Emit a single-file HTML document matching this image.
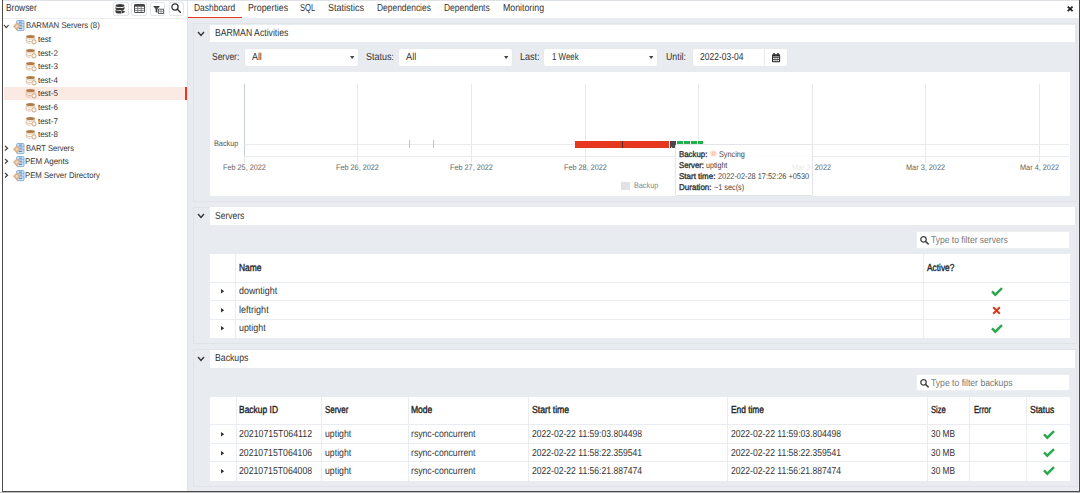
<!DOCTYPE html>
<html><head><meta charset="utf-8"><style>
html,body{margin:0;padding:0;}
body{width:1080px;height:493px;position:relative;overflow:hidden;background:#fff;font-family:"Liberation Sans", sans-serif;}
.a{position:absolute;}
.t{position:absolute;white-space:nowrap;line-height:1;transform-origin:0 0;text-rendering:geometricPrecision;}
svg{position:absolute;overflow:visible;}
</style></head><body>
<div class="a" style="left:187px;top:18px;width:893px;height:475px;background:#e8ebf0;"></div>
<div class="a" style="left:188px;top:0px;width:892px;height:18px;background:#fff;"></div>
<div class="a" style="left:187px;top:0px;width:1px;height:493px;background:#dfe2e7;"></div>
<div class="a" style="left:3px;top:18px;width:184px;height:1px;background:#eceef2;"></div>
<div class="a" style="left:3px;top:0px;width:1077px;height:1px;background:#dfe2e6;"></div>
<div class="a" style="left:188px;top:16.5px;width:54px;height:1.5px;background:#e5381f;"></div>
<div class="t" style="left:5.80px;top:4px;font-size:10.2px;color:#333;transform:scaleX(0.8243);">Browser</div>
<div class="a" style="left:113px;top:2px;width:15.5px;height:14px;background:#fff;border:1px solid #e3e6ea;box-sizing:border-box;border-radius:2px;"></div>
<div class="a" style="left:131.3px;top:2px;width:15.699999999999989px;height:14px;background:#fff;border:1px solid #e3e6ea;box-sizing:border-box;border-radius:2px;"></div>
<div class="a" style="left:150.2px;top:2px;width:15.300000000000011px;height:14px;background:#fff;border:1px solid #e3e6ea;box-sizing:border-box;border-radius:2px;"></div>
<div class="a" style="left:168.7px;top:2px;width:15.600000000000023px;height:14px;background:#fff;border:1px solid #e3e6ea;box-sizing:border-box;border-radius:2px;"></div>
<svg style="left:115px;top:4px" width="11" height="10" viewBox="0 0 11 10">
<ellipse cx="5" cy="1.6" rx="4.5" ry="1.6" fill="#3a3a3a"/>
<path d="M0.5 2.5v2.2c0 .9 2 1.6 4.5 1.6s4.5-.7 4.5-1.6V2.5c0 .9-2 1.6-4.5 1.6S.5 3.4.5 2.5z" fill="#3a3a3a"/>
<path d="M0.5 5.5v2.4c0 .9 2 1.6 4.5 1.6h1V6.9c-.3 0-.6 0-1 0C2.5 6.9.5 6.3.5 5.5z" fill="#3a3a3a"/>
<path d="M6.5 5.8l4 2-4 2z" fill="#3a3a3a"/>
</svg>
<svg style="left:134px;top:4px" width="11" height="9" viewBox="0 0 11 9">
<rect x="0.5" y="0.5" width="10" height="8" rx="0.6" fill="#fff" stroke="#444" stroke-width="1"/>
<rect x="0.5" y="0.5" width="10" height="2.2" fill="#444"/>
<path d="M0.5 4.6h10M0.5 6.6h10M3.8 2.5v6M7.2 2.5v6" stroke="#666" stroke-width="0.8"/>
</svg>
<svg style="left:152.5px;top:5.5px" width="11" height="8" viewBox="0 0 11 8">
<path d="M0 0h7l-2.6 3v4l-1.8-1V3z" fill="#444"/>
<rect x="5.5" y="3.2" width="5" height="4.3" fill="#fff" stroke="#555" stroke-width="0.9"/>
<path d="M5.5 5.3h5M8 3.2v4.3" stroke="#777" stroke-width="0.7"/>
</svg>
<svg style="left:171.3px;top:3.3px" width="10" height="10" viewBox="0 0 10 10">
<circle cx="4" cy="4" r="3.1" fill="none" stroke="#333" stroke-width="1.3"/>
<path d="M6.3 6.3L9.3 9.3" stroke="#333" stroke-width="1.5" stroke-linecap="round"/>
</svg>
<div class="a" style="left:4px;top:87px;width:181px;height:13px;background:#fbeae4;"></div>
<div class="a" style="left:185px;top:87px;width:2px;height:13px;background:#e5381f;"></div>
<svg style="left:3.2px;top:23.499999999999996px" width="6.6" height="4.6" viewBox="-1 -1 6.6 4.6"><path d="M0 0L2.3 2.6L4.6 0" fill="none" stroke="#333" stroke-width="1.1"/></svg>
<svg style="left:12.8px;top:20.4px" width="12" height="11" viewBox="0 0 12 11">
<path d="M4.6 0.5h5.4c.6 0 1 .4 1 .9v8.3c0 .5-.4.9-1 .9H4.6c-.6 0-1-.4-1-.9V1.4c0-.5.4-.9 1-.9z" fill="#d4e4f4" stroke="#7aaad8" stroke-width="0.9"/>
<path d="M3.6 3.6h7.4M3.6 6.8h7.4" stroke="#7aaad8" stroke-width="0.8"/>
<path d="M5.8 2.1h3.4M5.8 5.2h3.4M5.8 8.4h3.4" stroke="#4f86c6" stroke-width="1"/>
<path d="M3.9 2.3L7.8 6.3L3.9 10.5L0 6.3z" fill="#ddb28a"/>
<path d="M3.9 4.6L5.6 6.3L3.9 8.1L2.2 6.3z" fill="#f0d9c2"/>
</svg>
<div class="t" style="left:25.50px;top:21px;font-size:8.3px;color:#333;transform:scaleX(0.9359);">BARMAN Servers (8)</div>
<svg style="left:26px;top:34.9px" width="11" height="10" viewBox="0 0 11 10">
<ellipse cx="4.5" cy="1.5" rx="4.4" ry="1.5" fill="#b27a48"/>
<path d="M0.2 2.6c0 .8 1.9 1.5 4.3 1.5s4.3-.7 4.3-1.5" fill="none" stroke="#d9b48f" stroke-width="0.9"/>
<path d="M0.2 3.2v3.6c0 .8 1.9 1.5 4.3 1.5" fill="none" stroke="#ddb894" stroke-width="0.8"/>
<path d="M8.8 3.2v1.6" fill="none" stroke="#ddb894" stroke-width="0.8"/>
<path d="M0.2 5.1c0 .8 1.9 1.5 4.3 1.5h1" fill="none" stroke="#d9b48f" stroke-width="0.9"/>
<circle cx="8" cy="6.9" r="2.1" fill="#fff" stroke="#c99567" stroke-width="0.9"/>
</svg>
<div class="t" style="left:37.90px;top:35px;font-size:8.3px;color:#333;transform:scaleX(0.9738);">test</div>
<svg style="left:26px;top:48.5px" width="11" height="10" viewBox="0 0 11 10">
<ellipse cx="4.5" cy="1.5" rx="4.4" ry="1.5" fill="#b27a48"/>
<path d="M0.2 2.6c0 .8 1.9 1.5 4.3 1.5s4.3-.7 4.3-1.5" fill="none" stroke="#d9b48f" stroke-width="0.9"/>
<path d="M0.2 3.2v3.6c0 .8 1.9 1.5 4.3 1.5" fill="none" stroke="#ddb894" stroke-width="0.8"/>
<path d="M8.8 3.2v1.6" fill="none" stroke="#ddb894" stroke-width="0.8"/>
<path d="M0.2 5.1c0 .8 1.9 1.5 4.3 1.5h1" fill="none" stroke="#d9b48f" stroke-width="0.9"/>
<circle cx="8" cy="6.9" r="2.1" fill="#fff" stroke="#c99567" stroke-width="0.9"/>
</svg>
<div class="t" style="left:37.90px;top:49px;font-size:8.3px;color:#333;transform:scaleX(0.9557);">test-2</div>
<svg style="left:26px;top:62.099999999999994px" width="11" height="10" viewBox="0 0 11 10">
<ellipse cx="4.5" cy="1.5" rx="4.4" ry="1.5" fill="#b27a48"/>
<path d="M0.2 2.6c0 .8 1.9 1.5 4.3 1.5s4.3-.7 4.3-1.5" fill="none" stroke="#d9b48f" stroke-width="0.9"/>
<path d="M0.2 3.2v3.6c0 .8 1.9 1.5 4.3 1.5" fill="none" stroke="#ddb894" stroke-width="0.8"/>
<path d="M8.8 3.2v1.6" fill="none" stroke="#ddb894" stroke-width="0.8"/>
<path d="M0.2 5.1c0 .8 1.9 1.5 4.3 1.5h1" fill="none" stroke="#d9b48f" stroke-width="0.9"/>
<circle cx="8" cy="6.9" r="2.1" fill="#fff" stroke="#c99567" stroke-width="0.9"/>
</svg>
<div class="t" style="left:37.90px;top:62px;font-size:8.3px;color:#333;transform:scaleX(0.9557);">test-3</div>
<svg style="left:26px;top:75.69999999999999px" width="11" height="10" viewBox="0 0 11 10">
<ellipse cx="4.5" cy="1.5" rx="4.4" ry="1.5" fill="#b27a48"/>
<path d="M0.2 2.6c0 .8 1.9 1.5 4.3 1.5s4.3-.7 4.3-1.5" fill="none" stroke="#d9b48f" stroke-width="0.9"/>
<path d="M0.2 3.2v3.6c0 .8 1.9 1.5 4.3 1.5" fill="none" stroke="#ddb894" stroke-width="0.8"/>
<path d="M8.8 3.2v1.6" fill="none" stroke="#ddb894" stroke-width="0.8"/>
<path d="M0.2 5.1c0 .8 1.9 1.5 4.3 1.5h1" fill="none" stroke="#d9b48f" stroke-width="0.9"/>
<circle cx="8" cy="6.9" r="2.1" fill="#fff" stroke="#c99567" stroke-width="0.9"/>
</svg>
<div class="t" style="left:37.90px;top:76px;font-size:8.3px;color:#333;transform:scaleX(0.9557);">test-4</div>
<svg style="left:26px;top:89.3px" width="11" height="10" viewBox="0 0 11 10">
<ellipse cx="4.5" cy="1.5" rx="4.4" ry="1.5" fill="#b27a48"/>
<path d="M0.2 2.6c0 .8 1.9 1.5 4.3 1.5s4.3-.7 4.3-1.5" fill="none" stroke="#d9b48f" stroke-width="0.9"/>
<path d="M0.2 3.2v3.6c0 .8 1.9 1.5 4.3 1.5" fill="none" stroke="#ddb894" stroke-width="0.8"/>
<path d="M8.8 3.2v1.6" fill="none" stroke="#ddb894" stroke-width="0.8"/>
<path d="M0.2 5.1c0 .8 1.9 1.5 4.3 1.5h1" fill="none" stroke="#d9b48f" stroke-width="0.9"/>
<circle cx="8" cy="6.9" r="2.1" fill="#fff" stroke="#c99567" stroke-width="0.9"/>
</svg>
<div class="t" style="left:37.90px;top:89px;font-size:8.3px;color:#333;transform:scaleX(0.9557);">test-5</div>
<svg style="left:26px;top:102.89999999999999px" width="11" height="10" viewBox="0 0 11 10">
<ellipse cx="4.5" cy="1.5" rx="4.4" ry="1.5" fill="#b27a48"/>
<path d="M0.2 2.6c0 .8 1.9 1.5 4.3 1.5s4.3-.7 4.3-1.5" fill="none" stroke="#d9b48f" stroke-width="0.9"/>
<path d="M0.2 3.2v3.6c0 .8 1.9 1.5 4.3 1.5" fill="none" stroke="#ddb894" stroke-width="0.8"/>
<path d="M8.8 3.2v1.6" fill="none" stroke="#ddb894" stroke-width="0.8"/>
<path d="M0.2 5.1c0 .8 1.9 1.5 4.3 1.5h1" fill="none" stroke="#d9b48f" stroke-width="0.9"/>
<circle cx="8" cy="6.9" r="2.1" fill="#fff" stroke="#c99567" stroke-width="0.9"/>
</svg>
<div class="t" style="left:37.90px;top:103px;font-size:8.3px;color:#333;transform:scaleX(0.9557);">test-6</div>
<svg style="left:26px;top:116.49999999999999px" width="11" height="10" viewBox="0 0 11 10">
<ellipse cx="4.5" cy="1.5" rx="4.4" ry="1.5" fill="#b27a48"/>
<path d="M0.2 2.6c0 .8 1.9 1.5 4.3 1.5s4.3-.7 4.3-1.5" fill="none" stroke="#d9b48f" stroke-width="0.9"/>
<path d="M0.2 3.2v3.6c0 .8 1.9 1.5 4.3 1.5" fill="none" stroke="#ddb894" stroke-width="0.8"/>
<path d="M8.8 3.2v1.6" fill="none" stroke="#ddb894" stroke-width="0.8"/>
<path d="M0.2 5.1c0 .8 1.9 1.5 4.3 1.5h1" fill="none" stroke="#d9b48f" stroke-width="0.9"/>
<circle cx="8" cy="6.9" r="2.1" fill="#fff" stroke="#c99567" stroke-width="0.9"/>
</svg>
<div class="t" style="left:37.90px;top:117px;font-size:8.3px;color:#333;transform:scaleX(0.9557);">test-7</div>
<svg style="left:26px;top:130.1px" width="11" height="10" viewBox="0 0 11 10">
<ellipse cx="4.5" cy="1.5" rx="4.4" ry="1.5" fill="#b27a48"/>
<path d="M0.2 2.6c0 .8 1.9 1.5 4.3 1.5s4.3-.7 4.3-1.5" fill="none" stroke="#d9b48f" stroke-width="0.9"/>
<path d="M0.2 3.2v3.6c0 .8 1.9 1.5 4.3 1.5" fill="none" stroke="#ddb894" stroke-width="0.8"/>
<path d="M8.8 3.2v1.6" fill="none" stroke="#ddb894" stroke-width="0.8"/>
<path d="M0.2 5.1c0 .8 1.9 1.5 4.3 1.5h1" fill="none" stroke="#d9b48f" stroke-width="0.9"/>
<circle cx="8" cy="6.9" r="2.1" fill="#fff" stroke="#c99567" stroke-width="0.9"/>
</svg>
<div class="t" style="left:37.90px;top:130px;font-size:8.3px;color:#333;transform:scaleX(0.9557);">test-8</div>
<svg style="left:3.7px;top:144.65px" width="4.6" height="6.5" viewBox="-1 -1 4.6 6.5"><path d="M0 0L2.6 2.25L0 4.5" fill="none" stroke="#444" stroke-width="1.2"/></svg>
<svg style="left:12.8px;top:142.70000000000002px" width="12" height="11" viewBox="0 0 12 11">
<path d="M4.6 0.5h5.4c.6 0 1 .4 1 .9v8.3c0 .5-.4.9-1 .9H4.6c-.6 0-1-.4-1-.9V1.4c0-.5.4-.9 1-.9z" fill="#d4e4f4" stroke="#7aaad8" stroke-width="0.9"/>
<path d="M3.6 3.6h7.4M3.6 6.8h7.4" stroke="#7aaad8" stroke-width="0.8"/>
<path d="M5.8 2.1h3.4M5.8 5.2h3.4M5.8 8.4h3.4" stroke="#4f86c6" stroke-width="1"/>
<path d="M3.9 2.3L7.8 6.3L3.9 10.5L0 6.3z" fill="#ddb28a"/>
<path d="M3.9 4.6L5.6 6.3L3.9 8.1L2.2 6.3z" fill="#f0d9c2"/>
</svg>
<div class="t" style="left:25.90px;top:144px;font-size:8.3px;color:#333;transform:scaleX(0.9086);">BART Servers</div>
<svg style="left:3.7px;top:158.24999999999997px" width="4.6" height="6.5" viewBox="-1 -1 4.6 6.5"><path d="M0 0L2.6 2.25L0 4.5" fill="none" stroke="#444" stroke-width="1.2"/></svg>
<svg style="left:12.8px;top:156.29999999999998px" width="12" height="11" viewBox="0 0 12 11">
<path d="M4.6 0.5h5.4c.6 0 1 .4 1 .9v8.3c0 .5-.4.9-1 .9H4.6c-.6 0-1-.4-1-.9V1.4c0-.5.4-.9 1-.9z" fill="#d4e4f4" stroke="#7aaad8" stroke-width="0.9"/>
<path d="M3.6 3.6h7.4M3.6 6.8h7.4" stroke="#7aaad8" stroke-width="0.8"/>
<path d="M5.8 2.1h3.4M5.8 5.2h3.4M5.8 8.4h3.4" stroke="#4f86c6" stroke-width="1"/>
<path d="M3.9 2.3L7.8 6.3L3.9 10.5L0 6.3z" fill="#ddb28a"/>
<path d="M3.9 4.6L5.6 6.3L3.9 8.1L2.2 6.3z" fill="#f0d9c2"/>
</svg>
<div class="t" style="left:24.80px;top:157px;font-size:8.3px;color:#333;transform:scaleX(0.9572);">PEM Agents</div>
<svg style="left:3.7px;top:171.85px" width="4.6" height="6.5" viewBox="-1 -1 4.6 6.5"><path d="M0 0L2.6 2.25L0 4.5" fill="none" stroke="#444" stroke-width="1.2"/></svg>
<svg style="left:12.8px;top:169.9px" width="12" height="11" viewBox="0 0 12 11">
<path d="M4.6 0.5h5.4c.6 0 1 .4 1 .9v8.3c0 .5-.4.9-1 .9H4.6c-.6 0-1-.4-1-.9V1.4c0-.5.4-.9 1-.9z" fill="#d4e4f4" stroke="#7aaad8" stroke-width="0.9"/>
<path d="M3.6 3.6h7.4M3.6 6.8h7.4" stroke="#7aaad8" stroke-width="0.8"/>
<path d="M5.8 2.1h3.4M5.8 5.2h3.4M5.8 8.4h3.4" stroke="#4f86c6" stroke-width="1"/>
<path d="M3.9 2.3L7.8 6.3L3.9 10.5L0 6.3z" fill="#ddb28a"/>
<path d="M3.9 4.6L5.6 6.3L3.9 8.1L2.2 6.3z" fill="#f0d9c2"/>
</svg>
<div class="t" style="left:24.80px;top:171px;font-size:8.3px;color:#333;transform:scaleX(0.9338);">PEM Server Directory</div>
<div class="t" style="left:193.70px;top:4px;font-size:10.2px;color:#333;transform:scaleX(0.8291);">Dashboard</div>
<div class="t" style="left:248.00px;top:4px;font-size:10.2px;color:#333;transform:scaleX(0.8632);">Properties</div>
<div class="t" style="left:300.30px;top:4px;font-size:10.2px;color:#333;transform:scaleX(0.7481);">SQL</div>
<div class="t" style="left:328.40px;top:4px;font-size:10.2px;color:#333;transform:scaleX(0.8853);">Statistics</div>
<div class="t" style="left:377.30px;top:4px;font-size:10.2px;color:#333;transform:scaleX(0.8272);">Dependencies</div>
<div class="t" style="left:444.40px;top:4px;font-size:10.2px;color:#333;transform:scaleX(0.8314);">Dependents</div>
<div class="t" style="left:502.70px;top:4px;font-size:10.2px;color:#333;transform:scaleX(0.8622);">Monitoring</div>
<svg style="left:1066.8px;top:5.9px" width="6.3" height="5.9" viewBox="0 0 6.3 5.9"><path d="M0.7 0.7L5.6 5.2M5.6 0.7L0.7 5.2" stroke="#222" stroke-width="1.8"/></svg>
<div class="a" style="left:192.5px;top:23px;width:884.0px;height:179px;border:1px solid #e0e3e8;box-sizing:border-box;"></div>
<div class="a" style="left:210px;top:25px;width:865px;height:17px;background:#fff;"></div>
<svg style="left:197.3px;top:30.8px" width="8" height="5.4" viewBox="-1 -1 8 5.4"><path d="M0 0L3.0 3.4L6 0" fill="none" stroke="#333" stroke-width="1.4"/></svg>
<div class="t" style="left:215.00px;top:29px;font-size:10.2px;color:#333;transform:scaleX(0.8530);">BARMAN Activities</div>
<div class="a" style="left:192.5px;top:206.5px;width:884.0px;height:137.5px;border:1px solid #e0e3e8;box-sizing:border-box;"></div>
<div class="a" style="left:210px;top:207px;width:865px;height:18px;background:#fff;"></div>
<svg style="left:197.3px;top:213.3px" width="8" height="5.4" viewBox="-1 -1 8 5.4"><path d="M0 0L3.0 3.4L6 0" fill="none" stroke="#333" stroke-width="1.4"/></svg>
<div class="t" style="left:215.00px;top:212px;font-size:10.2px;color:#333;transform:scaleX(0.8342);">Servers</div>
<div class="a" style="left:192.5px;top:349px;width:884.0px;height:138px;border:1px solid #e0e3e8;box-sizing:border-box;"></div>
<div class="a" style="left:210px;top:350px;width:865px;height:17.5px;background:#fff;"></div>
<svg style="left:197.3px;top:356.05px" width="8" height="5.4" viewBox="-1 -1 8 5.4"><path d="M0 0L3.0 3.4L6 0" fill="none" stroke="#333" stroke-width="1.4"/></svg>
<div class="t" style="left:215.00px;top:354px;font-size:10.2px;color:#333;transform:scaleX(0.8543);">Backups</div>
<div class="t" style="left:212.40px;top:53px;font-size:10.2px;color:#333;transform:scaleX(0.8311);">Server:</div>
<div class="a" style="left:244px;top:48px;width:115px;height:19px;background:#fff;border:1px solid #e6e9ed;box-sizing:border-box;border-radius:3px;"></div>
<div class="t" style="left:252.10px;top:53px;font-size:10.2px;color:#333;transform:scaleX(0.8681);">All</div>
<svg style="left:349.90000000000003px;top:55.5px" width="4.4" height="3" viewBox="0 0 4.4 3"><path d="M0 0h4.4L2.2 3z" fill="#444"/></svg>
<div class="t" style="left:365.90px;top:53px;font-size:10.2px;color:#333;transform:scaleX(0.8776);">Status:</div>
<div class="a" style="left:398px;top:48px;width:115px;height:19px;background:#fff;border:1px solid #e6e9ed;box-sizing:border-box;border-radius:3px;"></div>
<div class="t" style="left:405.60px;top:53px;font-size:10.2px;color:#333;transform:scaleX(0.9043);">All</div>
<svg style="left:503.90000000000003px;top:55.5px" width="4.4" height="3" viewBox="0 0 4.4 3"><path d="M0 0h4.4L2.2 3z" fill="#444"/></svg>
<div class="t" style="left:519.80px;top:53px;font-size:10.2px;color:#333;transform:scaleX(0.8845);">Last:</div>
<div class="a" style="left:543px;top:48px;width:115px;height:19px;background:#fff;border:1px solid #e6e9ed;box-sizing:border-box;border-radius:3px;"></div>
<div class="t" style="left:552.40px;top:53px;font-size:10.2px;color:#333;transform:scaleX(0.7771);">1 Week</div>
<svg style="left:648.9px;top:55.5px" width="4.4" height="3" viewBox="0 0 4.4 3"><path d="M0 0h4.4L2.2 3z" fill="#444"/></svg>
<div class="t" style="left:665.90px;top:53px;font-size:10.2px;color:#333;transform:scaleX(0.8624);">Until:</div>
<div class="a" style="left:692px;top:48px;width:96px;height:19px;background:#fff;border:1px solid #e6e9ed;box-sizing:border-box;border-radius:3px;"></div>
<div class="a" style="left:764.2px;top:48px;width:1.0px;height:19px;background:#e8eaee;"></div>
<div class="t" style="left:700.00px;top:53px;font-size:10.2px;color:#333;transform:scaleX(0.8332);">2022-03-04</div>
<svg style="left:771.7px;top:52.6px" width="8.1" height="9.2" viewBox="0 0 8.1 9.2">
<rect x="0" y="1.2" width="8.1" height="8" rx="0.9" fill="#2e2e2e"/>
<rect x="1.3" y="0" width="1.6" height="2.4" rx="0.6" fill="#2e2e2e"/><rect x="5.2" y="0" width="1.6" height="2.4" rx="0.6" fill="#2e2e2e"/>
<rect x="0.8" y="3.4" width="6.5" height="0.6" fill="#fff" opacity="0.8"/>
<rect x="1.2" y="4.7" width="1.5" height="1.4" fill="#fff"/><rect x="3.3" y="4.7" width="1.5" height="1.4" fill="#fff"/><rect x="5.4" y="4.7" width="1.5" height="1.4" fill="#fff"/>
<rect x="1.2" y="6.8" width="1.5" height="1.4" fill="#fff"/><rect x="3.3" y="6.8" width="1.5" height="1.4" fill="#fff"/><rect x="5.4" y="6.8" width="1.5" height="1.4" fill="#fff"/>
</svg>
<div class="a" style="left:210px;top:72px;width:860px;height:124px;background:#fff;"></div>
<div class="a" style="left:243.9px;top:84px;width:1.0px;height:73px;background:#c5cfdb;"></div>
<div class="a" style="left:243.9px;top:157px;width:1.0px;height:6px;background:#e0e3e8;"></div>
<div class="a" style="left:357.2px;top:84px;width:1.0px;height:79px;background:#e6e9ee;"></div>
<div class="a" style="left:471.2px;top:84px;width:1.0px;height:79px;background:#e6e9ee;"></div>
<div class="a" style="left:585.0px;top:84px;width:1.0px;height:79px;background:#e6e9ee;"></div>
<div class="a" style="left:698.0px;top:84px;width:1.0px;height:79px;background:#e6e9ee;"></div>
<div class="a" style="left:811.5px;top:84px;width:1.0px;height:79px;background:#e6e9ee;"></div>
<div class="a" style="left:925.1px;top:84px;width:1.0px;height:79px;background:#e6e9ee;"></div>
<div class="a" style="left:1039.0px;top:84px;width:1.0px;height:79px;background:#e6e9ee;"></div>
<div class="a" style="left:244px;top:143.6px;width:825px;height:1.0px;background:#e8ebef;"></div>
<div class="a" style="left:244px;top:156.3px;width:825px;height:1.0px;background:#e8ebef;"></div>
<div class="t" style="left:213.60px;top:140px;font-size:8px;color:#555;transform:scaleX(0.9106);">Backup</div>
<div class="a" style="left:409px;top:140px;width:1px;height:8px;background:#b9c4d0;"></div>
<div class="a" style="left:432.5px;top:140px;width:1.0px;height:8px;background:#b9c4d0;"></div>
<div class="t" style="left:222.70px;top:164px;font-size:8px;color:#666;transform:scaleX(0.9099);">Feb 25, 2022</div>
<div class="t" style="left:336.00px;top:164px;font-size:8px;color:#666;transform:scaleX(0.9099);">Feb 26, 2022</div>
<div class="t" style="left:450.00px;top:164px;font-size:8px;color:#666;transform:scaleX(0.9099);">Feb 27, 2022</div>
<div class="t" style="left:563.80px;top:164px;font-size:8px;color:#666;transform:scaleX(0.9099);">Feb 28, 2022</div>
<div class="t" style="left:792.20px;top:164px;font-size:8px;color:#666;transform:scaleX(0.9158);">Mar 2, 2022</div>
<div class="t" style="left:905.80px;top:164px;font-size:8px;color:#666;transform:scaleX(0.9158);">Mar 3, 2022</div>
<div class="t" style="left:1019.70px;top:164px;font-size:8px;color:#666;transform:scaleX(0.9158);">Mar 4, 2022</div>
<div class="a" style="left:574.7px;top:140.7px;width:94.79999999999995px;height:6.900000000000006px;background:#e5381f;"></div>
<div class="a" style="left:622px;top:140.7px;width:1px;height:6.900000000000006px;background:#5a2a20;"></div>
<div class="a" style="left:669.5px;top:140.7px;width:1.0px;height:6.900000000000006px;background:#5a3a35;"></div>
<div class="a" style="left:671px;top:140.7px;width:5px;height:6.900000000000006px;background:#48484e;border-radius:0 0 0 2px;"></div>
<div class="a" style="left:677.4px;top:140.7px;width:5.600000000000023px;height:3.1000000000000227px;background:#21b04b;"></div>
<div class="a" style="left:677.4px;top:143.8px;width:5.600000000000023px;height:3.799999999999983px;background:#ececec;"></div>
<div class="a" style="left:684.1999999999999px;top:140.7px;width:5.600000000000023px;height:3.1000000000000227px;background:#21b04b;"></div>
<div class="a" style="left:684.1999999999999px;top:143.8px;width:5.600000000000023px;height:3.799999999999983px;background:#ececec;"></div>
<div class="a" style="left:691.0px;top:140.7px;width:5.600000000000023px;height:3.1000000000000227px;background:#21b04b;"></div>
<div class="a" style="left:691.0px;top:143.8px;width:5.600000000000023px;height:3.799999999999983px;background:#ececec;"></div>
<div class="a" style="left:697.8px;top:140.7px;width:5.600000000000023px;height:3.1000000000000227px;background:#21b04b;"></div>
<div class="a" style="left:697.8px;top:143.8px;width:5.600000000000023px;height:3.799999999999983px;background:#ececec;"></div>
<div class="a" style="left:621px;top:182px;width:9px;height:7.599999999999994px;background:#e2e2e2;"></div>
<div class="t" style="left:633.80px;top:182px;font-size:8px;color:#888;transform:scaleX(0.9069);">Backup</div>
<div class="a" style="left:674.5px;top:144.3px;width:138.89999999999998px;height:52.0px;background:rgba(255,255,255,0.85);border:1px solid #e3e5e8;box-sizing:border-box;border-radius:2px;"></div>
<div class="t" style="left:678.67px;top:150px;font-size:8.3px;color:#333;-webkit-text-stroke:0.35px #333;transform:scaleX(0.9453);">Backup:</div>
<svg style="left:710px;top:150px" width="7" height="7" viewBox="0 0 7 7"><circle cx="3.5" cy="3.5" r="3.3" fill="#fbe3d6"/><circle cx="3.5" cy="3.5" r="1.5" fill="none" stroke="#f3b090" stroke-width="0.8"/></svg>
<div class="t" style="left:719.40px;top:150px;font-size:8.3px;color:#444;transform:scaleX(0.8762);">Syncing</div>
<div class="t" style="left:678.67px;top:161px;font-size:8.3px;color:#333;-webkit-text-stroke:0.35px #333;transform:scaleX(0.9324);">Server:</div>
<div class="t" style="left:706.10px;top:161px;font-size:8.3px;color:#444;transform:scaleX(0.8553);">uptight</div>
<div class="t" style="left:678.67px;top:172px;font-size:8.3px;color:#333;-webkit-text-stroke:0.35px #333;transform:scaleX(0.9613);">Start time:</div>
<div class="t" style="left:717.50px;top:172px;font-size:8.3px;color:#444;transform:scaleX(0.8880);">2022-02-28 17:52:26 +0530</div>
<div class="t" style="left:678.67px;top:183px;font-size:8.3px;color:#333;-webkit-text-stroke:0.35px #333;transform:scaleX(0.9667);">Duration:</div>
<div class="t" style="left:713.75px;top:183px;font-size:8.3px;color:#444;transform:scaleX(0.8775);">~1 sec(s)</div>
<div class="a" style="left:916px;top:231px;width:154px;height:18px;background:#fff;border:1px solid #eceef1;box-sizing:border-box;"></div>
<svg style="left:920px;top:236.3px" width="9" height="8" viewBox="0 0 9 8">
<circle cx="3.5" cy="3.4" r="2.7" fill="none" stroke="#444" stroke-width="1.3"/>
<path d="M5.5 5.4L8.2 7.9" stroke="#444" stroke-width="1.5" stroke-linecap="round"/></svg>
<div class="t" style="left:931.40px;top:236px;font-size:9.8px;color:#777;transform:scaleX(0.8709);">Type to filter servers</div>
<div class="a" style="left:916px;top:374px;width:154px;height:17px;background:#fff;border:1px solid #eceef1;box-sizing:border-box;"></div>
<svg style="left:920px;top:379.0px" width="9" height="8" viewBox="0 0 9 8">
<circle cx="3.5" cy="3.4" r="2.7" fill="none" stroke="#444" stroke-width="1.3"/>
<path d="M5.5 5.4L8.2 7.9" stroke="#444" stroke-width="1.5" stroke-linecap="round"/></svg>
<div class="t" style="left:931.40px;top:379px;font-size:9.8px;color:#777;transform:scaleX(0.8805);">Type to filter backups</div>
<div class="a" style="left:210px;top:254px;width:860px;height:84px;background:#fff;"></div>
<div class="a" style="left:210px;top:282.0px;width:860px;height:1.0px;background:#e9ecf0;"></div>
<div class="a" style="left:210px;top:300.3px;width:860px;height:1.0px;background:#e9ecf0;"></div>
<div class="a" style="left:210px;top:318.9px;width:860px;height:1.0px;background:#e9ecf0;"></div>
<div class="a" style="left:235.1px;top:254px;width:1.0px;height:84px;background:#e9ecf0;"></div>
<div class="a" style="left:923.0px;top:254px;width:1.0px;height:84px;background:#e9ecf0;"></div>
<div class="t" style="left:239.08px;top:264px;font-size:10.2px;color:#222;-webkit-text-stroke:0.35px #222;transform:scaleX(0.8306);">Name</div>
<div class="t" style="left:926.77px;top:264px;font-size:10.2px;color:#222;-webkit-text-stroke:0.35px #222;transform:scaleX(0.8195);">Active?</div>
<svg style="left:221.2px;top:289.2px" width="3.2" height="4.6" viewBox="0 0 3.2 4.6"><path d="M0 0L3.2 2.3L0 4.6z" fill="#333"/></svg>
<div class="t" style="left:238.90px;top:287px;font-size:10.2px;color:#333;transform:scaleX(0.8748);">downtight</div>
<svg style="left:221.2px;top:307.6px" width="3.2" height="4.6" viewBox="0 0 3.2 4.6"><path d="M0 0L3.2 2.3L0 4.6z" fill="#333"/></svg>
<div class="t" style="left:238.90px;top:306px;font-size:10.2px;color:#333;transform:scaleX(0.8875);">leftright</div>
<svg style="left:221.2px;top:326.0px" width="3.2" height="4.6" viewBox="0 0 3.2 4.6"><path d="M0 0L3.2 2.3L0 4.6z" fill="#333"/></svg>
<div class="t" style="left:238.90px;top:324px;font-size:10.2px;color:#333;transform:scaleX(0.8713);">uptight</div>
<svg style="left:990.6px;top:286.8px" width="12" height="9" viewBox="0 0 12 9"><path d="M1 4.4L4.3 7.7L11 1.1" fill="none" stroke="#2aa84a" stroke-width="2.4"/></svg>
<svg style="left:992.1px;top:305.7px" width="9" height="9" viewBox="0 0 9 9"><path d="M1.2 1.2L7.8 7.8M7.8 1.2L1.2 7.8" stroke="#e0341d" stroke-width="2"/></svg>
<svg style="left:990.6px;top:324.0px" width="12" height="9" viewBox="0 0 12 9"><path d="M1 4.4L4.3 7.7L11 1.1" fill="none" stroke="#2aa84a" stroke-width="2.4"/></svg>
<div class="a" style="left:210px;top:396.7px;width:860px;height:84.30000000000001px;background:#fff;"></div>
<div class="a" style="left:210px;top:424.1px;width:860px;height:1.0px;background:#e9ecf0;"></div>
<div class="a" style="left:210px;top:442.6px;width:860px;height:1.0px;background:#e9ecf0;"></div>
<div class="a" style="left:210px;top:461.1px;width:860px;height:1.0px;background:#e9ecf0;"></div>
<div class="a" style="left:235.5px;top:396.7px;width:1.0px;height:84.30000000000001px;background:#e9ecf0;"></div>
<div class="a" style="left:321.0px;top:396.7px;width:1.0px;height:84.30000000000001px;background:#e9ecf0;"></div>
<div class="a" style="left:407.9px;top:396.7px;width:1.0px;height:84.30000000000001px;background:#e9ecf0;"></div>
<div class="a" style="left:527.7px;top:396.7px;width:1.0px;height:84.30000000000001px;background:#e9ecf0;"></div>
<div class="a" style="left:726.8px;top:396.7px;width:1.0px;height:84.30000000000001px;background:#e9ecf0;"></div>
<div class="a" style="left:926.8px;top:396.7px;width:1.0px;height:84.30000000000001px;background:#e9ecf0;"></div>
<div class="a" style="left:969.0px;top:396.7px;width:1.0px;height:84.30000000000001px;background:#e9ecf0;"></div>
<div class="a" style="left:1026.2px;top:396.7px;width:1.0px;height:84.30000000000001px;background:#e9ecf0;"></div>
<div class="t" style="left:238.98px;top:406px;font-size:10.2px;color:#222;-webkit-text-stroke:0.35px #222;transform:scaleX(0.8308);">Backup ID</div>
<div class="t" style="left:325.18px;top:406px;font-size:10.2px;color:#222;-webkit-text-stroke:0.35px #222;transform:scaleX(0.7758);">Server</div>
<div class="t" style="left:410.98px;top:406px;font-size:10.2px;color:#222;-webkit-text-stroke:0.35px #222;transform:scaleX(0.8386);">Mode</div>
<div class="t" style="left:531.67px;top:406px;font-size:10.2px;color:#222;-webkit-text-stroke:0.35px #222;transform:scaleX(0.8526);">Start time</div>
<div class="t" style="left:731.17px;top:406px;font-size:10.2px;color:#222;-webkit-text-stroke:0.35px #222;transform:scaleX(0.8202);">End time</div>
<div class="t" style="left:930.77px;top:406px;font-size:10.2px;color:#222;-webkit-text-stroke:0.35px #222;transform:scaleX(0.7468);">Size</div>
<div class="t" style="left:973.77px;top:406px;font-size:10.2px;color:#222;-webkit-text-stroke:0.35px #222;transform:scaleX(0.7507);">Error</div>
<div class="t" style="left:1030.08px;top:406px;font-size:10.2px;color:#222;-webkit-text-stroke:0.35px #222;transform:scaleX(0.8389);">Status</div>
<svg style="left:221.2px;top:432.1px" width="3.2" height="4.6" viewBox="0 0 3.2 4.6"><path d="M0 0L3.2 2.3L0 4.6z" fill="#333"/></svg>
<div class="t" style="left:238.80px;top:430px;font-size:10.2px;color:#333;transform:scaleX(0.8623);">20210715T064112</div>
<div class="t" style="left:325.00px;top:430px;font-size:10.2px;color:#333;transform:scaleX(0.8583);">uptight</div>
<div class="t" style="left:410.80px;top:430px;font-size:10.2px;color:#333;transform:scaleX(0.8496);">rsync-concurrent</div>
<div class="t" style="left:531.70px;top:430px;font-size:10.2px;color:#333;transform:scaleX(0.8420);">2022-02-22 11:59:03.804498</div>
<div class="t" style="left:731.00px;top:430px;font-size:10.2px;color:#333;transform:scaleX(0.8427);">2022-02-22 11:59:03.804498</div>
<div class="t" style="left:930.60px;top:430px;font-size:10.2px;color:#333;transform:scaleX(0.8196);">30 MB</div>
<svg style="left:1042.5px;top:429.5px" width="12" height="9" viewBox="0 0 12 9"><path d="M1 4.4L4.3 7.7L11 1.1" fill="none" stroke="#2aa84a" stroke-width="2.4"/></svg>
<svg style="left:221.2px;top:450.55px" width="3.2" height="4.6" viewBox="0 0 3.2 4.6"><path d="M0 0L3.2 2.3L0 4.6z" fill="#333"/></svg>
<div class="t" style="left:238.80px;top:449px;font-size:10.2px;color:#333;transform:scaleX(0.8547);">20210715T064106</div>
<div class="t" style="left:325.00px;top:449px;font-size:10.2px;color:#333;transform:scaleX(0.8583);">uptight</div>
<div class="t" style="left:410.80px;top:449px;font-size:10.2px;color:#333;transform:scaleX(0.8496);">rsync-concurrent</div>
<div class="t" style="left:531.70px;top:449px;font-size:10.2px;color:#333;transform:scaleX(0.8420);">2022-02-22 11:58:22.359541</div>
<div class="t" style="left:731.00px;top:449px;font-size:10.2px;color:#333;transform:scaleX(0.8427);">2022-02-22 11:58:22.359541</div>
<div class="t" style="left:930.60px;top:449px;font-size:10.2px;color:#333;transform:scaleX(0.8196);">30 MB</div>
<svg style="left:1042.5px;top:447.95px" width="12" height="9" viewBox="0 0 12 9"><path d="M1 4.4L4.3 7.7L11 1.1" fill="none" stroke="#2aa84a" stroke-width="2.4"/></svg>
<svg style="left:221.2px;top:469.0px" width="3.2" height="4.6" viewBox="0 0 3.2 4.6"><path d="M0 0L3.2 2.3L0 4.6z" fill="#333"/></svg>
<div class="t" style="left:238.80px;top:467px;font-size:10.2px;color:#333;transform:scaleX(0.8547);">20210715T064008</div>
<div class="t" style="left:325.00px;top:467px;font-size:10.2px;color:#333;transform:scaleX(0.8583);">uptight</div>
<div class="t" style="left:410.80px;top:467px;font-size:10.2px;color:#333;transform:scaleX(0.8496);">rsync-concurrent</div>
<div class="t" style="left:531.70px;top:467px;font-size:10.2px;color:#333;transform:scaleX(0.8420);">2022-02-22 11:56:21.887474</div>
<div class="t" style="left:731.00px;top:467px;font-size:10.2px;color:#333;transform:scaleX(0.8427);">2022-02-22 11:56:21.887474</div>
<div class="t" style="left:930.60px;top:467px;font-size:10.2px;color:#333;transform:scaleX(0.8196);">30 MB</div>
<svg style="left:1042.5px;top:466.4px" width="12" height="9" viewBox="0 0 12 9"><path d="M1 4.4L4.3 7.7L11 1.1" fill="none" stroke="#2aa84a" stroke-width="2.4"/></svg>
<div class="a" style="left:2px;top:0px;width:1px;height:492px;background:#4a4a4a;"></div>
<div class="a" style="left:1079px;top:0px;width:1px;height:492px;background:#4a4a4a;"></div>
<div class="a" style="left:2px;top:491px;width:1078px;height:1px;background:#4a4a4a;"></div>
<div class="a" style="left:0px;top:492px;width:1080px;height:1px;background:#bdbdbd;"></div>
</body></html>
